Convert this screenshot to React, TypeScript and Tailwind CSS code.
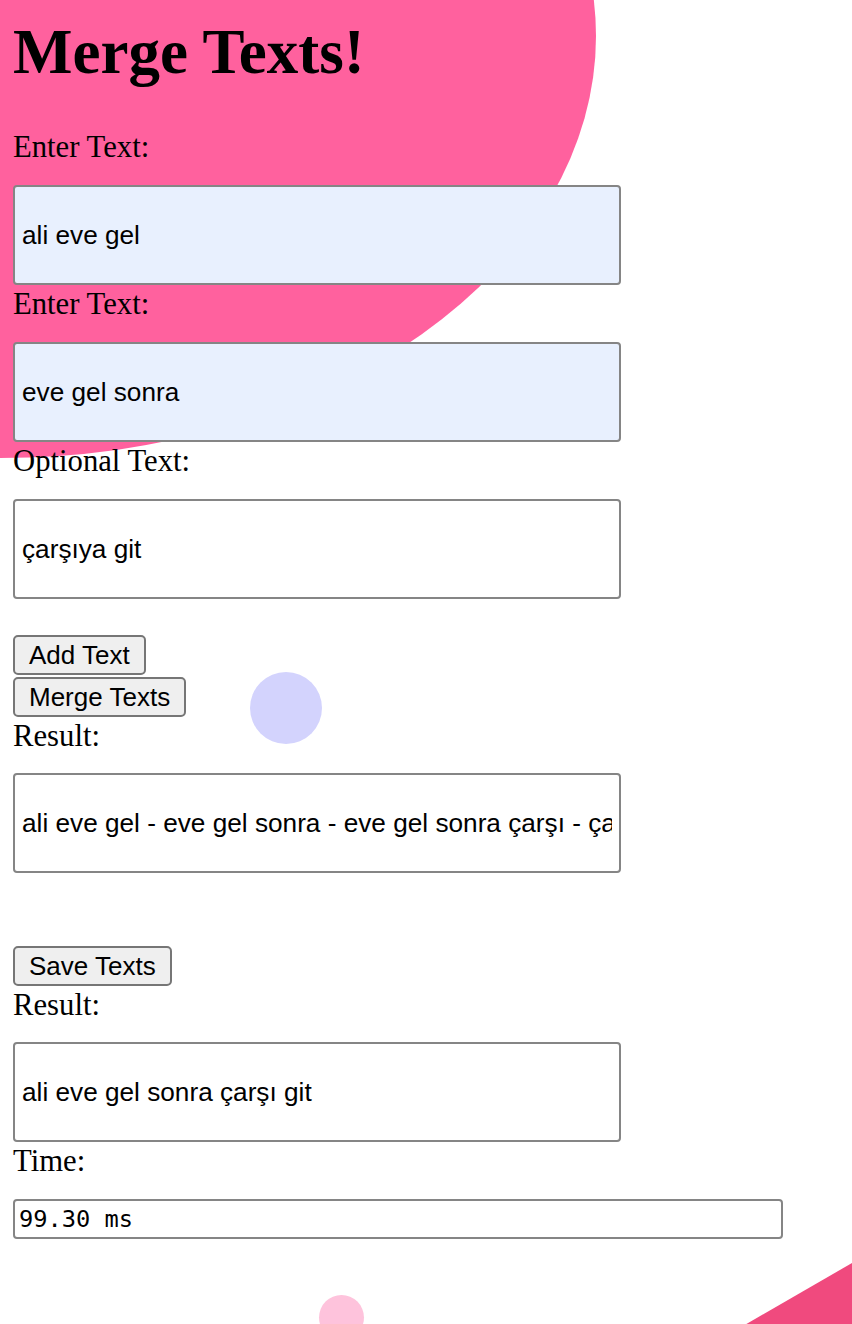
import React from "react";

const serif = { fontFamily: '"Liberation Serif", "Times New Roman", serif' };

function Field({ label, value, autofill, tight }: { label: string; value: string; autofill?: boolean; tight?: boolean }) {
  return (
    <>
      <label className={`block text-[30.7px] leading-[39px] ${tight ? "mb-[17px]" : "mb-[18px]"}`}>{label}</label>
      <input
        readOnly
        value={value}
        className={`block w-[608px] h-[100px] border-2 border-[#858585] rounded-[4px] pl-[7px] pr-[7px] text-[26.2px] text-black font-['Liberation_Sans',Arial,sans-serif] outline-none ${
          autofill ? "bg-[#e8f0fe]" : "bg-white"
        }`}
      />
    </>
  );
}

function Btn({ children }: { children: React.ReactNode }) {
  return (
    <button className="h-[40px] px-[14px] border-2 border-[#767676] rounded-[5px] bg-[#efefef] text-[26px] leading-none text-black font-['Liberation_Sans',Arial,sans-serif]">
      {children}
    </button>
  );
}

export default function App() {
  return (
    <div className="relative w-full h-[1324px] overflow-hidden bg-white text-black" style={serif}>
      {/* decorative shapes */}
      <div className="absolute left-[-596px] top-[-386px] w-[1192px] h-[844px] rounded-[50%] bg-[#ff619e]" />
      <div className="absolute left-[250px] top-[672px] w-[72px] h-[72px] rounded-full bg-[#d3d3fd]" />
      <div className="absolute left-[319px] top-[1295px] w-[45px] h-[45px] rounded-full bg-[#fec3dc]" />
      <div className="absolute right-0 bottom-0 w-[160px] h-[100px] bg-[#f04a7e] [clip-path:polygon(100%_39%,100%_100%,34%_100%)]" />

      <div className="relative flex flex-col items-start px-[13px]">
        <h1 className="mt-[17px] mb-[40px] text-[63px] leading-[71px] font-bold">Merge Texts!</h1>

        <Field label="Enter Text:" value="ali eve gel" autofill />
        <Field label="Enter Text:" value="eve gel sonra" autofill />
        <Field label="Optional Text:" value="çarşıya git" />

        <div className="mt-[36px] flex flex-col items-start gap-[2px]">
          <Btn>Add Text</Btn>
          <Btn>Merge Texts</Btn>
        </div>

        <Field label="Result:" value="ali eve gel - eve gel sonra - eve gel sonra çarşı - çarşıya git" tight />

        <div className="mt-[73px]">
          <Btn>Save Texts</Btn>
        </div>

        <Field label="Result:" value="ali eve gel sonra çarşı git" tight />

        <label className="block text-[30.7px] leading-[39px] mb-[18px]">Time:</label>
        <input
          readOnly
          value="99.30 ms"
          className="block w-[770px] h-[40px] border-2 border-[#858585] rounded-[4px] pl-[4px] bg-white text-[23.7px] text-black font-['DejaVu_Sans_Mono',monospace] outline-none"
        />
      </div>
    </div>
  );
}
